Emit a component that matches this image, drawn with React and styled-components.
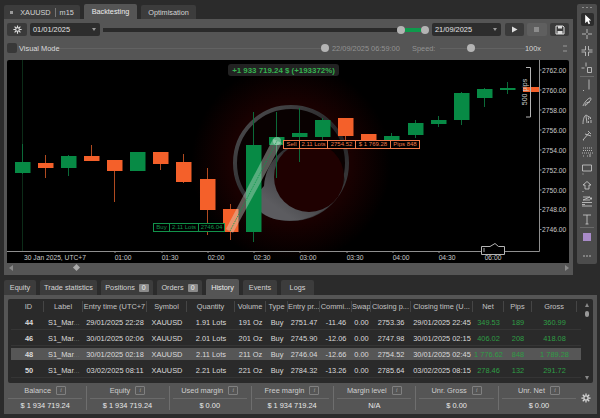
import React from "react";
import styled, { createGlobalStyle } from "styled-components";

const GREEN = "#078a45";
const ORANGE = "#f4602a";

const GlobalStyle = createGlobalStyle`
  html, body {
    margin: 0;
    background: #2b2b2b;
    font-family: "Liberation Sans", Arial, sans-serif;
    overflow: hidden;
  }
  * { box-sizing: border-box; }
`;

const Page = styled.div`
  width: 600px;
  height: 418px;
  padding: 4px 3px 4px 4px;
  display: flex;
  flex-direction: column;
  background: #2b2b2b;
  color: #e4e4e4;
  font-size: 7.4px;
  overflow: hidden;
`;

const TopArea = styled.div`
  display: flex;
  gap: 4px;
  height: 271px;
`;

const MainColumn = styled.div`
  width: 569px;
  display: flex;
  flex-direction: column;
`;

const TabRow = styled.div`
  display: flex;
  align-items: flex-end;
  gap: ${(p) => p.$gap || 4}px;
  height: ${(p) => p.$height}px;
  flex: none;
`;

const Tab = styled.div`
  width: ${(p) => p.$w}px;
  height: ${(p) => (p.$active ? "100%" : "calc(100% - 1px)")};
  display: flex;
  align-items: center;
  justify-content: center;
  gap: 4px;
  background: ${(p) => (p.$active ? "#555555" : "#3c3c3c")};
  color: ${(p) => (p.$active ? "#ececec" : "#d4d4d4")};
  border-radius: 2px 2px 0 0;
  font-size: 7.3px;
  white-space: nowrap;
`;

const TabDot = styled.span`
  width: 3px;
  height: 3px;
  background: #9a9a9a;
  margin-right: 3px;
`;

const TabDivider = styled.span`
  width: 1px;
  height: 9px;
  background: #777;
`;

const Badge = styled.span`
  background: #8a8a8a;
  color: #eee;
  font-size: 7px;
  line-height: 8px;
  padding: 0 3px;
  border-radius: 1px;
`;

const Panel = styled.div`
  flex: 1;
  background: #555555;
  padding: 4px 4px 3px 3px;
  display: flex;
  flex-direction: column;
`;

const Controls = styled.div`
  display: flex;
  align-items: center;
  height: 13px;
  flex: none;
`;

const IconButton = styled.div`
  width: ${(p) => p.$w}px;
  height: 13px;
  margin-left: ${(p) => p.$ml || 0}px;
  display: flex;
  align-items: center;
  justify-content: center;
  background: ${(p) => (p.$dim ? "#5f5f5f" : "#3a3a3a")};
  border-radius: 2px;
  flex: none;
`;

const DateSelect = styled.div`
  width: ${(p) => p.$w}px;
  height: 13px;
  margin-left: 3px;
  padding: 0 4px 0 3px;
  display: flex;
  align-items: center;
  justify-content: space-between;
  background: #2d2d2d;
  border-radius: 2px;
  font-size: 7.4px;
  flex: none;

  &::after {
    content: "";
    border-left: 2px solid transparent;
    border-right: 2px solid transparent;
    border-top: 3px solid #999;
  }
`;

const RangeSlider = styled.div`
  flex: 1;
  margin-left: 3px;
  display: flex;
  align-items: center;
`;

const RangeTrack = styled.div`
  height: 4px;
  flex: ${(p) => (p.$green ? "none" : 1)};
  width: ${(p) => (p.$green ? "16px" : "auto")};
  background: ${(p) => (p.$green ? "#0e9a4c" : "#2a2a2a")};
`;

const Thumb = styled.span`
  width: 8px;
  height: 8px;
  border-radius: 50%;
  background: #b4b4b4;
  flex: none;
`;

const VisualRow = styled.div`
  display: flex;
  align-items: center;
  height: 14px;
  margin-top: 5px;
  padding-right: 2px;
  flex: none;
`;

const Checkbox = styled.span`
  width: 10px;
  height: 10px;
  background: #383838;
  border-radius: 2px;
  flex: none;
`;

const VisualLabel = styled.span`
  margin-left: 2px;
  font-size: 7.4px;
  color: #dcdcdc;
`;

const ThinLine = styled.span`
  height: 1px;
  background: #626262;
  flex: ${(p) => (p.$w ? "none" : 1)};
  width: ${(p) => (p.$w ? `${p.$w}px` : "auto")};
`;

const DimText = styled.span`
  margin-left: ${(p) => p.$ml || 0}px;
  width: ${(p) => p.$w}px;
  color: ${(p) => p.$color || "#939393"};
  font-size: 7.4px;
  white-space: nowrap;
  flex: none;
`;

const Spinner = styled.span`
  margin-left: 22px;
  width: 4px;
  height: 7px;
  flex: none;
  background: linear-gradient(#777 0 2px, transparent 2px 5px, #777 5px);
`;

const Chart = styled.div`
  position: relative;
  height: 203px;
  margin-top: 5px;
  background: #000;
  border-radius: 2px 2px 0 0;
  flex: none;
  overflow: hidden;

  svg {
    display: block;
  }
`;

const ProfitBadge = styled.div`
  position: absolute;
  left: 221px;
  top: 4px;
  width: 111px;
  height: 12px;
  display: flex;
  align-items: center;
  justify-content: center;
  background: #222;
  border-radius: 3px;
  color: #35b34f;
  font-size: 7.9px;
  font-weight: bold;
  white-space: nowrap;
`;

const TradeTag = styled.div`
  position: absolute;
  left: ${(p) => p.$left}px;
  top: ${(p) => p.$top}px;
  height: 9px;
  display: flex;
  background: #000;
  border: 1px solid ${(p) => p.$color};
  color: ${(p) => p.$color};
  font-size: 6px;
  line-height: 7px;
  white-space: nowrap;
`;

const TagCell = styled.span`
  width: ${(p) => p.$w}px;
  text-align: center;
  border-left: ${(p) => (p.$first ? "none" : "1px solid currentColor")};
`;

const ScrollRow = styled.div`
  height: 9px;
  display: flex;
  align-items: center;
  flex: none;
  padding: 0 0 0 2px;
`;

const ScrollSpace = styled.span`
  width: ${(p) => (p.$w ? `${p.$w}px` : "auto")};
  flex: ${(p) => (p.$w ? "none" : 1)};
`;

const ScrollArrow = styled.span`
  border-top: 3px solid transparent;
  border-bottom: 3px solid transparent;
  ${(p) => (p.$right ? "border-left" : "border-right")}: 4px solid #8a8a8a;
`;

const ScrollThumb = styled.span`
  width: 5px;
  height: 5px;
  background: #aaa;
  transform: rotate(45deg);
`;

const Toolbox = styled.div`
  width: 20px;
  height: 260px;
  background: #4c4c4c;
  border-radius: 2px;
  display: flex;
  flex-direction: column;
  align-items: center;
  padding-top: 3px;
`;

const Grip = styled.span`
  width: 10px;
  height: 1px;
  margin-bottom: 4px;
  background: repeating-linear-gradient(90deg, #8e8e8e 0 2px, transparent 2px 4px);
  flex: none;
`;

const Tool = styled.div`
  width: 14px;
  height: ${(p) => p.$h || 16.7}px;
  display: flex;
  align-items: center;
  justify-content: center;
  flex: none;

  svg {
    display: block;
    ${(p) => p.$selected && "background: #2c2c2c; border-radius: 2px;"}
  }
`;

const ToolDivider = styled.span`
  width: 14px;
  height: 1px;
  background: #6a6a6a;
  flex: none;
`;

const Swatch = styled.span`
  width: 8px;
  height: 8px;
  background: #a98bc9;
`;

const BottomArea = styled.div`
  margin-top: 4px;
  display: flex;
  flex-direction: column;
`;

const BottomPanel = styled.div`
  width: 593px;
  height: 119px;
  background: #555555;
  padding: 4px 4px 0;
  display: flex;
  flex-direction: column;
  position: relative;
`;

const TableBox = styled.div`
  height: 84px;
  background: #2a2a2a;
  border-radius: 2px;
  overflow: hidden;
  position: relative;
  padding-left: 3px;
  flex: none;
`;

const GridRow = styled.div`
  display: grid;
  grid-template-columns: 33px 39px 64px 40px 48px 31px 22px 32px 32px 19px 40px 62px 31px 28px 45px;
  align-items: center;
  width: 570px;
  height: ${(p) => (p.$header ? 15 : 16)}px;
  background: ${(p) => (p.$selected ? "#565656" : "transparent")};
  background-clip: content-box;
  padding: ${(p) => (p.$selected ? "2px 0" : 0)};
  box-shadow: ${(p) => (p.$header || p.$selected ? "none" : "inset 0 -1px 0 #353535")};
  font-size: 7.4px;
  white-space: nowrap;
`;

const HeadCell = styled.div`
  height: 11px;
  line-height: 11px;
  text-align: center;
  overflow: hidden;
  color: #c2c2c2;
  border-right: 1px solid #454545;

  &:first-child {
    padding-left: 3px;
  }
`;

const Cell = styled.div`
  text-align: ${(p) => p.$align || "center"};
  padding-left: ${(p) => p.$pad || 0}px;
  overflow: hidden;
  color: ${(p) => (p.$green ? "#2e9e45" : "#dadada")};
  font-weight: ${(p) => (p.$bold ? "bold" : "normal")};
`;

const Ellipsis = styled.span`
  color: #6f6f6f;
`;

const TableScroll = styled.div`
  position: absolute;
  right: 0;
  top: 0;
  bottom: 0;
  width: 12px;
  display: flex;
  flex-direction: column;
  align-items: center;
  padding: 4px 0 3px;
`;

const ScrollUp = styled.span`
  border-left: 2.5px solid transparent;
  border-right: 2.5px solid transparent;
  ${(p) => (p.$down ? "border-top" : "border-bottom")}: 4px solid #888;
  ${(p) => p.$down && "margin-top: auto;"}
`;

const ScrollPill = styled.span`
  width: 4px;
  height: 6px;
  margin-top: 4px;
  border-radius: 2px;
  background: #999;
`;

const StatsStrip = styled.div`
  display: flex;
  height: 31px;
  margin-left: -4px;
`;

const Stat = styled.div`
  width: 82.3px;
  padding: 2px 4px 0;
  position: relative;
  flex: none;
  text-align: center;

  &:not(:first-child)::before {
    content: "";
    position: absolute;
    left: 0;
    top: 3px;
    bottom: 4px;
    width: 1px;
    background: #6e6e6e;
  }
`;

const StatLabel = styled.div`
  height: 11px;
  display: flex;
  align-items: center;
  justify-content: center;
  gap: 5px;
  color: #cecece;
  font-size: 7.4px;
`;

const InfoBox = styled.span`
  width: 10px;
  height: 9px;
  border: 1px solid #808080;
  border-radius: 1px;
  color: #9a9a9a;
  font-family: "Liberation Serif", serif;
  font-style: italic;
  font-size: 7px;
  line-height: 7px;
  text-align: center;
`;

const StatValue = styled.div`
  margin-top: 2px;
  padding-top: 2px;
  border-top: 1px solid #6a6a6a;
  color: #e8e8e8;
  font-size: 7.4px;
  line-height: 9px;
`;

const CornerGear = styled.div`
  position: absolute;
  right: 6px;
  bottom: 11px;
  display: flex;
`;

const candles = [
  [15, 162, 173, 144, 174, 1], [38, 163, 168, 155, 178, 0], [61, 156, 168, 155, 176, 1],
  [84, 156, 161, 145, 161, 0], [107, 160, 171, 160, 202, 0], [130, 152, 171, 152, 171, 1],
  [153, 152, 164, 152, 170, 0], [176, 162, 182, 154, 183, 0], [200, 179, 210, 168, 235, 0],
  [223, 209, 232, 204, 240, 0], [246, 145, 232, 112, 242, 1], [269, 137, 145, 112, 178, 1],
  [292, 133, 137, 108, 162, 1], [315, 120, 137, 118, 140, 1], [338, 118, 136, 118, 140, 0],
  [361, 134, 140, 134, 140, 0], [384, 136, 140, 133, 140, 1], [408, 123, 135, 120, 138, 1],
  [431, 120, 124, 116, 127, 1], [454, 93, 120, 92, 125, 1], [477, 89, 98, 88, 107, 1],
  [500, 88, 90, 82, 94, 1],
];

const priceLabels = [
  ["2762.00", 70], ["2760.00", 90], ["2758.00", 110], ["2756.00", 130], ["2754.00", 150],
  ["2752.00", 170], ["2750.00", 190], ["2748.00", 209.5], ["2746.00", 229.5],
];

const timeLabels = [
  ["30 Jan 2025, UTC+7", 55], ["01:00", 123], ["01:30", 170], ["02:00", 216], ["02:30", 262],
  ["03:00", 308], ["03:30", 355], ["04:00", 401], ["04:30", 447], ["06:00", 493],
];

const ChartDrawing = () => (
  <svg width="562" height="203" viewBox="7 60 562 203" fontFamily="Liberation Sans, Arial, sans-serif">
    <defs>
      <radialGradient id="glow" cx="50%" cy="50%" r="50%">
        <stop offset="0%" stopColor="#1f0101" />
        <stop offset="60%" stopColor="#190101" />
        <stop offset="100%" stopColor="#000000" />
      </radialGradient>
      <linearGradient id="crescent" x1="0.85" y1="0.1" x2="0.25" y2="0.85">
        <stop offset="0%" stopColor="#111" />
        <stop offset="40%" stopColor="#333335" />
        <stop offset="100%" stopColor="#5c5c60" />
      </linearGradient>
      <linearGradient id="ring" x1="0" y1="0" x2="1" y2="1">
        <stop offset="0%" stopColor="#505052" />
        <stop offset="60%" stopColor="#222224" />
        <stop offset="100%" stopColor="#48484a" />
      </linearGradient>
    </defs>
    <circle cx="291" cy="163" r="100" fill="url(#glow)" />
    <circle cx="291" cy="163" r="56" fill="#090101" stroke="url(#ring)" strokeWidth="4" />
    <path d="M304 141 C282 146 266 162 264 186 C250 200 255 216 280 220 C306 224 334 212 345 180 C340 155 325 143 304 141 Z" fill="url(#crescent)" />
    <circle cx="309" cy="177" r="35" fill="#1f0101" />
    <line x1="22.5" y1="60" x2="22.5" y2="251" stroke="#0c2c18" />
    {candles.map(([x, top, bottom, wTop, wBottom, up]) => {
      const color = up ? GREEN : ORANGE;
      return (
        <g key={x}>
          <line x1={x + 7.5} x2={x + 7.5} y1={wTop} y2={wBottom} stroke={up ? "#0b6a38" : "#b04a20"} />
          <rect x={x} y={top} width="15.5" height={bottom - top} fill={color} />
        </g>
      );
    })}
    <rect x="523" y="87" width="16" height="5" fill={ORANGE} />
    <polygon points="226,229 233,233 282,143 273,139" fill="#d8e8dc" opacity="0.38" />
    <circle cx="277" cy="141" r="4" fill="#d8e8dc" opacity="0.45" />
    <line x1="230" y1="231" x2="277" y2="141" stroke="#0c9a4c" strokeDasharray="1 1" />
    <path d="M526 67.5H530.5V117M526 117H530.5" fill="none" stroke="#b5b5b5" />
    <text x="527" y="92" transform="rotate(-90 527 92)" textAnchor="middle" fontSize="7" fill="#cfcfcf">500 pips</text>
    <line x1="539.5" y1="60" x2="539.5" y2="251.5" stroke="#8f8f8f" />
    <line x1="7" y1="251.5" x2="539.5" y2="251.5" stroke="#8f8f8f" />
    {priceLabels.map(([label, y]) => (
      <g key={label}>
        <line x1="539" x2="541.5" y1={y} y2={y} stroke="#8f8f8f" />
        <text x="542" y={y + 2.5} fontSize="6.7" fill="#cacaca">{label}</text>
      </g>
    ))}
    {timeLabels.map(([label, x], i) => (
      <g key={label}>
        {i > 0 && <line x1={x - 8} x2={x - 8} y1="251" y2="253" stroke="#8f8f8f" />}
        <text x={x} y="259.5" textAnchor="middle" fontSize="6.7" fill="#cacaca">{label}</text>
      </g>
    ))}
    <path d="M481.5 246.5H490L495 243.5L498.5 246.5H504.5V254.5H481.5Z" fill="#000" stroke="#b5b5b5" />
    <rect x="483" y="248" width="2" height="4" fill="#555" />
  </svg>
);

const Gear = ({ size = 12, color = "#e0e0e0" }) => (
  <svg width={size} height={size} viewBox="0 0 24 24" fill="none" stroke={color} strokeWidth="3">
    <circle cx="12" cy="12" r="5" />
    <path d="M12 1v5M12 18v5M1 12h5M18 12h5M4.2 4.2l3.6 3.6M16.2 16.2l3.6 3.6M4.2 19.8l3.6-3.6M16.2 7.8l3.6-3.6" />
  </svg>
);

const toolIcons = [
  "M7 2v4M7 8v4M2 7h4M8 7h4",
  "M5.5 2v4H1.5M8.5 2v4h4M5.5 12V8H1.5M8.5 12V8h4",
  "M6 1.5v4M1.5 7h3M7.5 6.5h4v5h-4z",
];
const toolIcons2 = [
  "M9 1.5v10M3 12.5h1",
  "M3 11c1-3 5-8 7-8s1 2-1 4-4 5-4 3 3-3 5-3",
  "M3 12c0-4 1-8 3-9l5 3-1 1M6 4l1 7M8.5 5.5v2M11 8v3M8.5 9v2",
  "M3 12l6-7M5 6l6 2M8 3l3 3M3 12l1 0",
];
const toolIcons3 = [
  "M3 3h1M5 3h1M7 3h1M9 3h1M11 3h1M3 5.5h1M5 5.5h1M7 5.5h1M9 5.5h1M11 5.5h1M2 8h1M4 8h1M6 8h1M8 8h1M10 8h1M12 8h1M3 11h1M10 9v3M7 11h1",
  "M2.5 3h9v6h-9zM2.5 12h1",
  "M7 2.5l4 3.5H9v4H5V6H3zM2.5 12.5h1",
  "M3 2h7l-7 3h7M11 2v3M10 3.5h2M2 7.5h10M2 11h10M2 9.5h3",
  "M3 3h8M7 3v9M5.5 12h3",
];

const ToolSvg = ({ d }) => (
  <svg width="14" height="14" viewBox="0 0 14 14" fill="none" stroke="#cfcfcf" strokeWidth="0.8">
    <path d={d} />
  </svg>
);

const Tools = () => (
  <Toolbox>
    <Grip />
    <Tool $selected $h={14}>
      <svg width="13" height="13" viewBox="0 0 14 14">
        <path d="M4.5 2v9l2.2-2 1.5 3.2 1.6-.8L8.4 8.2H11Z" fill="#fff" />
      </svg>
    </Tool>
    {toolIcons.map((d) => <Tool key={d}><ToolSvg d={d} /></Tool>)}
    <ToolDivider />
    {toolIcons2.map((d) => <Tool key={d}><ToolSvg d={d} /></Tool>)}
    {toolIcons3.map((d) => <Tool key={d}><ToolSvg d={d} /></Tool>)}
    <ToolDivider />
    <Tool $h={18}><Swatch /></Tool>
    <Tool $h={20}><ToolSvg d="M3 7h2M6 7h2M9 7h2" /></Tool>
  </Toolbox>
);

const headers = ["ID", "Label", "Entry time (UTC+7", "Symbol", "Quantity", "Volume", "Type", "Entry pr...", "Commi...", "Swap", "Closing p...", "Closing time (U...", "Net", "Pips", "Gross"];

const rows = [
  ["44", "29/01/2025 22:28", "1.91 Lots", "191 Oz", "2751.47", "-11.46", "2753.36", "29/01/2025 22:45", "349.53", "189", "360.99"],
  ["46", "30/01/2025 02:06", "2.01 Lots", "201 Oz", "2745.90", "-12.06", "2747.98", "30/01/2025 02:15", "406.02", "208", "418.08"],
  ["48", "30/01/2025 02:18", "2.11 Lots", "211 Oz", "2746.04", "-12.66", "2754.52", "30/01/2025 02:45", "1 776.62", "848", "1 789.28"],
  ["50", "03/02/2025 08:11", "2.21 Lots", "221 Oz", "2784.32", "-13.26", "2785.64", "03/02/2025 08:15", "278.46", "132", "291.72"],
  ["52", "03/02/2025 08:40", "2.31 Lots", "231 Oz", "2785.10", "-13.86", "2786.27", "03/02/2025 08:45", "270.27", "117", "284.13"],
];

const stats = [
  ["Balance", "$ 1 934 719.24"], ["Equity", "$ 1 934 719.24"], ["Used margin", "$ 0.00"],
  ["Free margin", "$ 1 934 719.24"], ["Margin level", "N/A"], ["Unr. Gross", "$ 0.00"], ["Unr. Net", "$ 0.00"],
];

export default function App() {
  return (
    <Page>
      <GlobalStyle />
      <TopArea>
        <MainColumn>
          <TabRow $height={15}>
            <Tab $w={76}><TabDot />XAUUSD<TabDivider />m15</Tab>
            <Tab $w={53} $active>Backtesting</Tab>
            <Tab $w={55}>Optimisation</Tab>
          </TabRow>
          <Panel>
            <Controls>
              <IconButton $w={20}><Gear size={9} /></IconButton>
              <DateSelect $w={70}>01/01/2025</DateSelect>
              <RangeSlider>
                <RangeTrack />
                <Thumb />
                <RangeTrack $green />
                <Thumb />
              </RangeSlider>
              <DateSelect $w={69}>21/09/2025</DateSelect>
              <IconButton $w={19} $ml={4}>
                <svg width="7" height="7" viewBox="0 0 7 7"><path d="M1 0.5L6.5 3.5L1 6.5Z" fill="#ddd" /></svg>
              </IconButton>
              <IconButton $w={20} $ml={3} $dim>
                <svg width="6" height="6" viewBox="0 0 6 6"><rect width="5" height="5" fill="#8c8c8c" /></svg>
              </IconButton>
              <IconButton $w={19} $ml={3}>
                <svg width="10" height="10" viewBox="0 0 10 10">
                  <path d="M1 1h7l1 1v7H1Z" fill="none" stroke="#ddd" />
                  <path d="M3 1h4v2.5H3ZM2.5 6h5v3h-5Z" fill="#ddd" />
                </svg>
              </IconButton>
            </Controls>
            <VisualRow>
              <Checkbox />
              <VisualLabel>Visual Mode</VisualLabel>
              <ThinLine />
              <Thumb />
              <DimText $ml={3} $w={80}>22/09/2025 06:59:00</DimText>
              <DimText $w={28}>Speed:</DimText>
              <ThinLine $w={27} />
              <Thumb />
              <ThinLine $w={50} />
              <DimText $w={16} $color="#d4d4d4">100x</DimText>
              <Spinner />
            </VisualRow>
            <Chart>
              <ChartDrawing />
              <ProfitBadge>+1 933 719.24 $ (+193372%)</ProfitBadge>
              <TradeTag $left={146} $top={163} $color="#12924a">
                <TagCell $first $w={15}>Buy</TagCell>
                <TagCell $w={29}>2.11 Lots</TagCell>
                <TagCell $w={26}>2746.04</TagCell>
              </TradeTag>
              <TradeTag $left={276} $top={80} $color="#f07a4a">
                <TagCell $first $w={15}>Sell</TagCell>
                <TagCell $w={28}>2.11 Lots</TagCell>
                <TagCell $w={28}>2754.52</TagCell>
                <TagCell $w={35}>$ 1 769.28</TagCell>
                <TagCell $w={29}>Pips 848</TagCell>
              </TradeTag>
            </Chart>
            <ScrollRow>
              <ScrollArrow />
              <ScrollSpace $w={61} />
              <ScrollThumb />
              <ScrollSpace />
              <ScrollArrow $right />
            </ScrollRow>
          </Panel>
        </MainColumn>
        <Tools />
      </TopArea>
      <BottomArea>
        <TabRow $height={16} $gap={4}>
          <Tab $w={32}>Equity</Tab>
          <Tab $w={57}>Trade statistics</Tab>
          <Tab $w={52}>Positions<Badge>0</Badge></Tab>
          <Tab $w={45}>Orders<Badge>0</Badge></Tab>
          <Tab $w={33} $active>History</Tab>
          <Tab $w={34}>Events</Tab>
          <Tab $w={33}>Logs</Tab>
        </TabRow>
        <BottomPanel>
          <TableBox>
            <GridRow $header>
              {headers.map((h) => <HeadCell key={h}>{h}</HeadCell>)}
            </GridRow>
            {rows.map((r) => (
              <GridRow key={r[0]} $selected={r[0] === "48"}>
                <Cell $bold $pad={3}>{r[0]}</Cell>
                <Cell $align="left" $pad={4}>S1_Mar<Ellipsis>...</Ellipsis></Cell>
                <Cell>{r[1]}</Cell>
                <Cell>XAUUSD</Cell>
                <Cell>{r[2]}</Cell>
                <Cell>{r[3]}</Cell>
                <Cell>Buy</Cell>
                <Cell>{r[4]}</Cell>
                <Cell>{r[5]}</Cell>
                <Cell>0.00</Cell>
                <Cell>{r[6]}</Cell>
                <Cell>{r[7]}</Cell>
                <Cell $green>{r[8]}</Cell>
                <Cell $green>{r[9]}</Cell>
                <Cell $green>{r[10]}</Cell>
              </GridRow>
            ))}
            <TableScroll>
              <ScrollUp />
              <ScrollPill />
              <ScrollUp $down />
            </TableScroll>
          </TableBox>
          <StatsStrip>
            {stats.map(([label, value]) => (
              <Stat key={label}>
                <StatLabel>{label}<InfoBox>i</InfoBox></StatLabel>
                <StatValue>{value}</StatValue>
              </Stat>
            ))}
          </StatsStrip>
          <CornerGear><Gear size={10} color="#d8d8d8" /></CornerGear>
        </BottomPanel>
      </BottomArea>
    </Page>
  );
}
